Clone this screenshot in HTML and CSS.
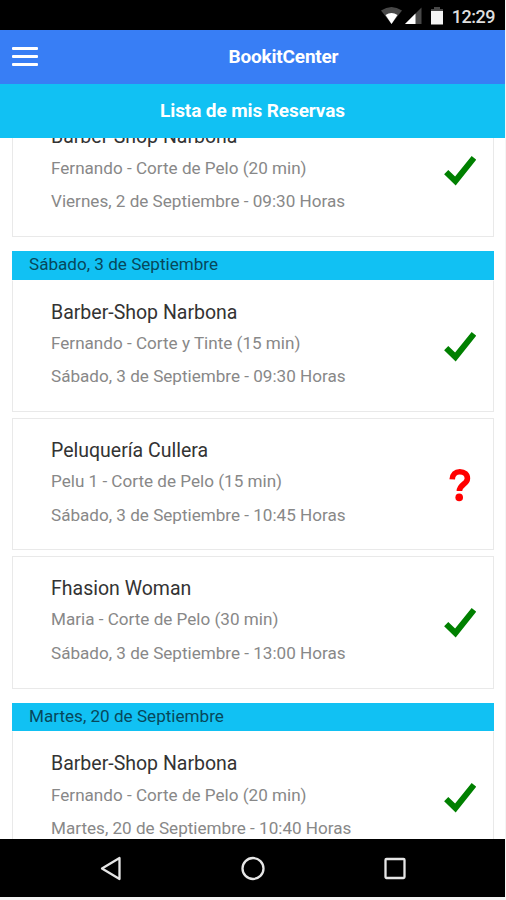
FILE: index.html
```html
<!DOCTYPE html>
<html lang="es">
<head>
    <meta charset="UTF-8">
    <title>BookitCenter</title>
    <link rel="stylesheet" href="styles.css">
</head>
<body>
    <svg class="defs" width="0" height="0">
        <symbol id="check" viewBox="0 0 34 32">
            <path d="M4.2 17.2 L13.4 26 L32 2.8" fill="none" stroke="#008000" stroke-width="6"/>
        </symbol>
    </svg>
    <div class="phone">
        <div class="status">
            <svg class="status-icons" width="66" height="20" viewBox="0 0 66 20">
                <path d="M0 4.5 Q10.5 -2.5 21 4.5 L10.5 18 Z" fill="#484848"/>
                <path d="M4.5 9 Q10.5 5 16.5 9 L10.5 18 Z" fill="#fff"/>
                <path d="M24 18 L40.5 1.5 V18 Z" fill="#484848"/>
                <path d="M24 18 L34.5 7.5 V18 Z" fill="#fff"/>
                <path d="M53 1 H59 V3 H62 V6 H50 V3 H53 Z" fill="#484848"/>
                <path d="M50 5 H62 V18.5 H50 Z" fill="#f4f4f4"/>
            </svg>
            <span class="clock">12:29</span>
        </div>
        <div class="header">
            <div class="menu">
                <span></span>
                <span></span>
                <span></span>
            </div>
            <div class="header-title">BookitCenter</div>
        </div>
        <div class="subheader">Lista de mis Reservas</div>
        <div class="content">
            <div class="group first">
                <div class="card">
                    <div class="info">
                        <h2>Barber-Shop Narbona</h2>
                        <p>Fernando - Corte de Pelo (20 min)</p>
                        <p>Viernes, 2 de Septiembre - 09:30 Horas</p>
                    </div>
                    <svg class="icon"><use href="#check"/></svg>
                </div>
            </div>
            <div class="group">
                <div class="day">Sábado, 3 de Septiembre</div>
                <div class="card">
                    <div class="info">
                        <h2>Barber-Shop Narbona</h2>
                        <p>Fernando - Corte y Tinte (15 min)</p>
                        <p>Sábado, 3 de Septiembre - 09:30 Horas</p>
                    </div>
                    <svg class="icon"><use href="#check"/></svg>
                </div>
                <div class="card">
                    <div class="info">
                        <h2>Peluquería Cullera</h2>
                        <p>Pelu 1 - Corte de Pelo (15 min)</p>
                        <p>Sábado, 3 de Septiembre - 10:45 Horas</p>
                    </div>
                    <svg class="icon" viewBox="0 0 34 32">
                        <path d="M10.2 10.4 C10.4 5.4 13.4 2.8 17.8 2.8 C22.6 2.8 25.4 5.4 25.4 9.4 C25.4 15.2 17.4 15.4 17.4 22" fill="none" stroke="#f00" stroke-width="5.6"/>
                        <circle cx="17.2" cy="28.4" r="3.8" fill="#f00"/>
                    </svg>
                </div>
                <div class="card">
                    <div class="info">
                        <h2>Fhasion Woman</h2>
                        <p>Maria - Corte de Pelo (30 min)</p>
                        <p>Sábado, 3 de Septiembre - 13:00 Horas</p>
                    </div>
                    <svg class="icon"><use href="#check"/></svg>
                </div>
            </div>
            <div class="group">
                <div class="day">Martes, 20 de Septiembre</div>
                <div class="card">
                    <div class="info">
                        <h2>Barber-Shop Narbona</h2>
                        <p>Fernando - Corte de Pelo (20 min)</p>
                        <p>Martes, 20 de Septiembre - 10:40 Horas</p>
                    </div>
                    <svg class="icon"><use href="#check"/></svg>
                </div>
            </div>
        </div>
        <div class="navbar">
            <svg width="24" height="26" viewBox="0 0 24 26">
                <path d="M3 13.5 L20.5 3 V24 Z" fill="none" stroke="#e6e6e6" stroke-width="2.3" stroke-linejoin="round"/>
            </svg>
            <svg width="24" height="26" viewBox="0 0 24 26">
                <circle cx="12" cy="13.5" r="10.5" fill="none" stroke="#e6e6e6" stroke-width="2.3"/>
            </svg>
            <svg width="24" height="26" viewBox="0 0 24 26">
                <rect x="2.5" y="4" width="19" height="19" rx="1" fill="none" stroke="#e6e6e6" stroke-width="2.3"/>
            </svg>
        </div>
    </div>
</body>
</html>
```

FILE: styles.css
```css
*{
    box-sizing: border-box;
}
body{
    margin: 0;
    background-color: #f5f5f5;
    font-family: Roboto, "Liberation Sans", sans-serif;
}
.defs{
    display: block;
}
.phone{
    display: flex;
    flex-direction: column;
    width: 505px;
    height: 897px;
    overflow: hidden;
    background-color: #fff;
}
.status{
    flex: none;
    display: flex;
    justify-content: flex-end;
    align-items: center;
    height: 30px;
    padding: 2px 10px 0 0;
    background-color: #000;
    color: #dedede;
}
.status-icons{
    margin-right: 5px;
}
.clock{
    font-size: 18px;
    font-weight: 500;
    letter-spacing: -0.5px;
}
.header{
    flex: none;
    display: grid;
    grid-template-columns: 62px 1fr 0;
    align-items: center;
    height: 54px;
    padding-bottom: 2px;
    background-color: #387ef5;
    color: #fff;
}
.menu{
    display: grid;
    gap: 5px;
    width: 26px;
    margin-left: 12px;
}
.menu span{
    height: 3px;
    border-radius: 1px;
    background-color: #fff;
}
.header-title{
    font-size: 19px;
    font-weight: 700;
    letter-spacing: -0.2px;
    text-align: center;
}
.subheader{
    flex: none;
    height: 54px;
    background-color: #11c1f3;
    color: #fff;
    font-size: 19px;
    font-weight: 700;
    letter-spacing: -0.1px;
    line-height: 54px;
    text-align: center;
}
.content{
    flex: 1;
    min-height: 0;
    overflow: hidden;
    padding: 0 11px 0 12px;
}
.group{
    margin-bottom: 14.2px;
}
/* the list is scrolled, so the first card starts under the header */
.first{
    margin-top: -33.7px;
}
.day{
    height: 28.5px;
    padding-left: 17px;
    background-color: #11c1f3;
    color: #07485b;
    font-size: 17.1px;
    line-height: 27px;
}
.card{
    display: flex;
    justify-content: space-between;
    height: 132.5px;
    padding: 0 17px 0 38px;
    border: 1px solid #e9e9e9;
}
.card + .card{
    margin-top: 5.8px;
}
.day + .card{
    border-top-color: #fff;
}
.info h2{
    margin: 19px 0 0;
    color: #333;
    font-size: 19.5px;
    font-weight: 400;
    line-height: 26px;
}
.info p{
    margin: 1px 0 0;
    color: #888;
    font-size: 17.1px;
    line-height: 32.5px;
}
.info h2 + p{
    margin-top: 1.4px;
}
.icon{
    width: 34px;
    height: 32px;
    margin-top: 50px;
    overflow: visible;
}
.navbar{
    flex: none;
    display: flex;
    justify-content: space-between;
    align-items: center;
    height: 58px;
    padding: 0 98px 0 99px;
    background-color: #000;
}
```
